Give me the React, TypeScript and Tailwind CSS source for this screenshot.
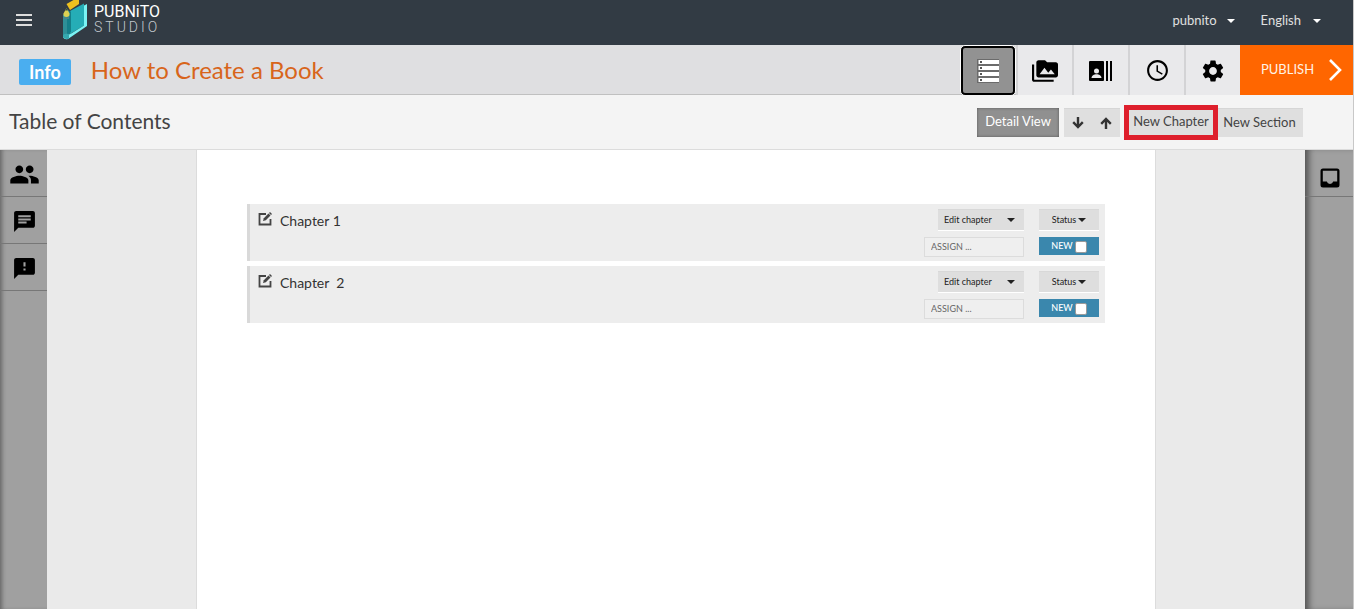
import type { ReactNode } from "react";
import { MdChat, MdFeedback, MdPeople, MdPermMedia, MdSchedule, MdSettings } from "react-icons/md";

const chapters = ["Chapter 1", "Chapter  2"];

function Caret({ className = "" }: { className?: string }) {
  return (
    <svg viewBox="0 0 8 4" className={`h-1 w-2 fill-current ${className}`} aria-hidden="true">
      <path d="M0 0h8L4 4z" />
    </svg>
  );
}

function Logo() {
  return (
    <a href="#home" className="flex h-full items-start text-white">
      <svg viewBox="0 0 26 40" className="h-10 w-[26px]" aria-hidden="true">
        <path d="M4.500 4 11.500 0H17v4L8 10z" fill="#edc01f" />
        <path d="M1 15 6 10l3 3v20l-8 4z" fill="#2f8f97" />
        <path d="M8 11 22 3.500v22L8 34z" fill="#25adb6" />
        <path d="M5 14l4-3v21l-4 3z" fill="#157f89" />
        <path d="m22 5.500 3-1.500v22L6 39q-4 1-5-2l4-2.500q3 0 5-1.500l12-7.500z" fill="#79f3f4" />
        <path d="M1 35q2-2 6-1v4.700q-5 1.300-6-2z" fill="#35a8ae" />
        <path d="M4.500 8 7.500 13.500Q8 17 4.500 17T1.500 13.500z" fill="#ddd052" />
        <path d="M4.500 8 5.800 10.500H3.200z" fill="#31503f" />
        <path d="M1.200 16.500q3 2 6 0L7 19H1.200z" fill="#49848a" />
      </svg>
      <span className="flex flex-col pt-1 pl-1.5 font-['Roboto',sans-serif]">
        <span className="text-[16px] leading-4">PUBNiTO</span>
        <span className="text-[14px] leading-[15px] font-light tracking-[3px] text-[#c3c9ce]">STUDIO</span>
      </span>
    </a>
  );
}

function ListIcon() {
  return (
    <svg viewBox="0 0 24 24" className="size-6" aria-hidden="true">
      {[0, 6, 12, 18].map((y) => (
        <g key={y}>
          <path d={`M1 ${y}h22v6H1z`} fill="#6b6b6b" />
          <path d={`M2.500 ${y + 1}H23v4H2.500z`} fill="#fff" />
          <path d={`M4 ${y + 2}h2v2H4z`} fill="#555" />
        </g>
      ))}
    </svg>
  );
}

function ContactsIcon() {
  return (
    <svg viewBox="0 0 24 20" className="h-5 w-6" aria-hidden="true">
      <path d="M1 0h13a1 1 0 0 1 1 1v18a1 1 0 0 1-1 1H1a1 1 0 0 1-1-1V1a1 1 0 0 1 1-1z" />
      <path d="M17 0h2v20h-2zM21 0h2v20h-2z" />
      <circle cx="7.500" cy="10" r="2.500" fill="#e9e9eb" />
      <path d="M2.500 17c0-2.500 2.500-3.800 5-3.800s5 1.300 5 3.800z" fill="#e9e9eb" />
    </svg>
  );
}

function InboxIcon() {
  return (
    <svg viewBox="0 0 20 20" className="size-5" aria-hidden="true">
      <path
        fillRule="evenodd"
        d="M3 .5h14A2.500 2.500 0 0 1 19.500 3v14a2.500 2.500 0 0 1-2.500 2.500H3A2.500 2.500 0 0 1 .5 17V3A2.500 2.500 0 0 1 3 .5zM2.800 2.800v10.700h4a3.300 3.300 0 0 0 6.400 0h4V2.800z"
      />
    </svg>
  );
}

function EditIcon() {
  return (
    <svg viewBox="0 0 14 14" className="size-3.5" fill="none" aria-hidden="true">
      <path d="M8 2H1.500v10.500h11V7" stroke="#444" strokeWidth="1.8" />
      <path d="m5 9 .8-2.800 4.700-4.700 2 2-4.700 4.700z" fill="#444" />
      <path d="m11 1 1-1 2 2-1 1z" fill="#444" />
    </svg>
  );
}

function ToolTab({ label, children }: { label: string; children: ReactNode }) {
  return (
    <button
      type="button"
      aria-label={label}
      className="flex h-[51px] w-14 items-center justify-center border-l-2 border-[#d3d3d5] bg-[#e9e9eb] text-black"
    >
      {children}
    </button>
  );
}

function SideButton({ label, children }: { label: string; children: ReactNode }) {
  return (
    <button
      type="button"
      aria-label={label}
      className="flex h-[47px] w-full items-center justify-center border-b border-[#777] pt-0.5 pl-px text-black"
    >
      {children}
    </button>
  );
}

function ChapterRow({ title }: { title: string }) {
  return (
    <li className="flex justify-between border-l-[3px] border-[#d9d9d9] bg-[#ededed]">
      <div className="flex items-start gap-2 pt-2 pl-2">
        <button type="button" aria-label={`Rename ${title}`}>
          <EditIcon />
        </button>
        <h2 className="text-[14px] leading-[18px] whitespace-pre text-[#333]">{title}</h2>
      </div>
      <div className="flex gap-[15px] pt-[5px] pr-1.5 pb-1 text-[9px] leading-3">
        <div className="flex w-[100px] flex-col items-end gap-1.5">
          <button
            type="button"
            className="flex h-[22px] w-[86px] items-center justify-between border-t border-b border-t-[#d8d8d8] border-b-white bg-[#dedede] pr-[9px] pl-1.5 text-[#222]"
          >
            Edit chapter
            <Caret />
          </button>
          <input
            aria-label={`Assign ${title}`}
            placeholder="ASSIGN ..."
            className="h-5 w-full border border-[#dcdcdc] bg-[#efefef] px-1.5 pb-0.5 text-[9px] outline-none placeholder:text-[#666]"
          />
        </div>
        <div className="flex w-[60px] flex-col gap-1.5">
          <button
            type="button"
            className="flex h-[22px] items-center justify-center gap-0.5 border-t border-b border-t-[#d8d8d8] border-b-white bg-[#dedede] text-[#222]"
          >
            Status
            <Caret />
          </button>
          <label className="flex h-[18px] items-center justify-center gap-0.5 bg-[#3a87ad] font-medium text-white">
            NEW
            <input type="checkbox" className="mt-px size-3 appearance-none rounded-[2px] border border-[#9a9a9a] bg-white" />
          </label>
        </div>
      </div>
    </li>
  );
}

export default function App() {
  return (
    <div className="flex min-h-screen flex-col border-r border-[#c8c8c8] bg-[#f4f4f4] font-['Lato',sans-serif]">
      <header className="flex h-[45px] items-center justify-between bg-[#323b44] pr-8 pl-3.5 text-[13px] text-[#e0e0e0]">
        <div className="flex h-full gap-7">
          <button type="button" aria-label="Menu" className="flex h-10 items-center">
            <svg viewBox="0 0 20 12" className="h-3 w-5" aria-hidden="true">
              <path d="M2 0h16v2H2zM2 5h16v2H2zM2 10h16v2H2z" fill="#ddd" />
            </svg>
          </button>
          <Logo />
        </div>
        <nav className="flex gap-[26px] pb-1">
          <button type="button" className="flex items-center gap-2.5">
            pubnito <Caret className="text-white" />
          </button>
          <button type="button" className="flex items-center gap-3">
            English <Caret className="text-white" />
          </button>
        </nav>
      </header>

      <div className="flex h-[50px] items-start justify-between border-b border-[#c0c0c0] bg-[#dfdfe1]">
        <div className="flex h-[50px] items-center gap-5 pl-[19px]">
          <span className="mt-1 flex h-[26px] items-center rounded-[2px] bg-[#4aaef0] px-2.5 text-[18px] font-bold text-white">
            Info
          </span>
          <h1 className="text-[24px] leading-8 text-[#d8651b]">How to Create a Book</h1>
        </div>
        <nav aria-label="Book tools" className="flex">
          <button
            type="button"
            aria-label="Contents"
            className="flex h-[51px] w-14 items-center justify-center rounded-[5px] border border-white bg-black p-0.5"
          >
            <span className="flex h-full w-full items-center justify-center rounded-[2px] bg-[#929292]">
              <ListIcon />
            </span>
          </button>
          <ToolTab label="Media">
            <MdPermMedia className="size-[26px]" />
          </ToolTab>
          <ToolTab label="Contacts">
            <ContactsIcon />
          </ToolTab>
          <ToolTab label="History">
            <MdSchedule className="size-[25px]" />
          </ToolTab>
          <ToolTab label="Settings">
            <MdSettings className="size-[26px]" />
          </ToolTab>
          <button
            type="button"
            className="flex h-[50px] w-[113px] items-center justify-between bg-[#ff6600] pr-[11px] pl-[21px] text-[13px] text-[#fff3e6]"
          >
            PUBLISH
            <svg viewBox="0 0 14 24" className="h-6 w-3.5" fill="none" aria-hidden="true">
              <path d="m2 2 10 10L2 22" stroke="white" strokeWidth="2.6" />
            </svg>
          </button>
        </nav>
      </div>

      <div className="flex h-[55px] items-center justify-between border-b border-[#dcdcdc] bg-[#f4f4f4] pr-[50px] pl-[9px]">
        <h2 className="pb-0.5 text-[21px] leading-7 text-[#444]">Table of Contents</h2>
        <div className="flex items-center text-[13px] text-[#444]">
          <button
            type="button"
            className="mr-[5px] h-[29px] w-[82px] bg-[#909090] text-white shadow-[inset_0_0_3px_#555]"
          >
            Detail View
          </button>
          <div className="mr-1 flex h-[29px] w-14 items-center justify-around border-t border-[#d6d6d6] bg-[#dfdfdf]">
            <button type="button" aria-label="Move down">
              <svg viewBox="0 0 12 12" className="size-3" fill="none" stroke="#333" strokeWidth="2.4" aria-hidden="true">
                <path d="M6 0v10M1.200 5.200 6 10l4.800-4.800" />
              </svg>
            </button>
            <button type="button" aria-label="Move up">
              <svg viewBox="0 0 12 12" className="size-3" fill="none" stroke="#333" strokeWidth="2.4" aria-hidden="true">
                <path d="M6 12V2M1.200 6.800 6 2l4.800 4.800" />
              </svg>
            </button>
          </div>
          <button type="button" className="h-[35px] w-[94px] border-[5px] border-[#de1f2c] bg-[#dfdfdf]">
            New Chapter
          </button>
          <button type="button" className="h-[29px] w-[85px] border-t border-[#d6d6d6] bg-[#dfdfdf] pr-0.5">
            New Section
          </button>
        </div>
      </div>

      <div className="flex flex-1">
        <aside className="w-[47px] bg-[#a0a0a0] shadow-[inset_4px_0_4px_-2px_#666]">
          <SideButton label="People">
            <MdPeople className="size-[31px]" />
          </SideButton>
          <SideButton label="Comments">
            <MdChat className="size-[25px]" />
          </SideButton>
          <SideButton label="Feedback">
            <MdFeedback className="size-[25px]" />
          </SideButton>
        </aside>
        <main className="flex flex-1 justify-center bg-[#eaeaea]">
          <ul className="flex w-full max-w-[960px] flex-col gap-[5px] border-x border-[#dcdcdc] bg-white px-[50px] pt-[54px]">
            {chapters.map((title) => (
              <ChapterRow key={title} title={title} />
            ))}
          </ul>
        </main>
        <aside className="w-12 bg-[#a0a0a0] shadow-[inset_7px_0_6px_-3px_#555]">
          <button
            type="button"
            aria-label="Inbox"
            className="flex h-[47px] w-full items-end justify-center border-b border-[#777] pb-2 pl-0.5 text-black"
          >
            <InboxIcon />
          </button>
        </aside>
      </div>
    </div>
  );
}
